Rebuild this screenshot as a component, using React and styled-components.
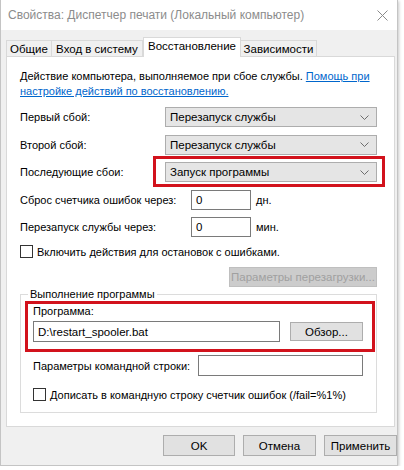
import React from 'react'
import styled, { createGlobalStyle } from 'styled-components'

const GlobalStyle = createGlobalStyle`
  html, body { margin: 0; padding: 0; background: #ffffff; }
  body {
    font-family: "Liberation Sans", Arial, sans-serif;
    font-size: 11px;
    color: #000;
  }
  * { box-sizing: border-box; }
`

const Window = styled.div`
  width: 398px;
  height: 466px;
  background: #f0f0f0;
  border: 1px solid #c4c4c4;
  border-top: none;
  box-shadow: 1px 1px 3px rgba(0, 0, 0, 0.22);
  display: flex;
  flex-direction: column;
`

const TitleBar = styled.div`
  height: 30px;
  background: #fff;
  display: flex;
  align-items: center;
  justify-content: space-between;
  padding: 0 9px 0 7px;
  color: #8c8c8c;
  font-size: 12px;
`

const Body = styled.div`
  flex: 1;
  padding: 8px 0 0 5px;
  display: flex;
  flex-direction: column;
`

const TabStrip = styled.div`
  display: flex;
  align-items: flex-end;
  height: 19px;
  position: relative;
  z-index: 1;
  margin-bottom: -1px;
`

const Tab = styled.div`
  width: ${p => p.w}px;
  height: ${p => (p.active ? 20 : 17)}px;
  background: ${p => (p.active ? '#fff' : '#f0f0f0')};
  border: 1px solid #d9d9d9;
  border-bottom: ${p => (p.active ? 'none' : '1px solid #d9d9d9')};
  border-left: ${p => (p.first || p.active ? '1px solid #d9d9d9' : 'none')};
  display: flex;
  align-items: ${p => (p.active ? 'flex-start' : 'center')};
  padding-top: ${p => (p.active ? 2 : 0)}px;
  justify-content: center;
  font-size: 11.5px;
  white-space: nowrap;
`

const Panel = styled.div`
  width: 389px;
  height: 371px;
  background: #fff;
  border: 1px solid #d9d9d9;
  padding: 12px 17px 0 13px;
`

const Description = styled.p`
  margin: 0;
  line-height: 15px;
  white-space: nowrap;
`

const HelpLink = styled.a`
  color: #0066cc;
  text-decoration: underline;
`

const FailGrid = styled.div`
  display: grid;
  grid-template-columns: 145px 212px;
  grid-auto-rows: 20px;
  row-gap: 7.5px;
  align-items: center;
  margin-top: 8px;
`

const Highlight = styled.div`
  position: relative;
  height: 100%;
  &::after {
    content: '';
    position: absolute;
    left: ${p => p.l}px;
    right: ${p => p.r}px;
    top: ${p => p.t}px;
    bottom: ${p => p.b}px;
    border: 3px solid #d2121c;
    pointer-events: none;
  }
`

const Select = styled.div`
  height: 20px;
  background: #e5e5e5;
  border: 1px solid #adadad;
  display: flex;
  align-items: center;
  justify-content: space-between;
  padding: 0 7px 0 4px;
  font-size: 11.5px;
`

const DelayGrid = styled.div`
  display: grid;
  grid-template-columns: 166px 60px auto;
  column-gap: 5px;
  grid-auto-rows: 20px;
  row-gap: 7px;
  align-items: center;
  margin-top: 8px;
`

const Input = styled.div`
  height: ${p => p.h || 20}px;
  width: ${p => (p.w ? `${p.w}px` : 'auto')};
  background: #fff;
  border: 1px solid #7a7a7a;
  display: flex;
  align-items: center;
  padding-left: 4px;
  font-size: 11.5px;
`

const CheckRow = styled.label`
  display: flex;
  align-items: center;
  gap: 4px;
  margin-top: ${p => p.mt}px;
  height: 13px;
`

const Box = styled.span`
  width: 13px;
  height: 13px;
  border: 1px solid #333;
  background: #fff;
  flex-shrink: 0;
`

const Button = styled.div`
  width: ${p => p.w}px;
  height: ${p => p.h || 20}px;
  background: ${p => (p.disabled ? '#cccccc' : '#e1e1e1')};
  border: 1px solid ${p => (p.disabled ? '#bfbfbf' : '#adadad')};
  color: ${p => (p.disabled ? '#a0a0a0' : '#000')};
  display: flex;
  align-items: center;
  justify-content: center;
  font-size: 11.5px;
  white-space: nowrap;
  flex-shrink: 0;
`

const RightAlign = styled.div`
  display: flex;
  justify-content: flex-end;
  margin-top: 9px;
`

const Group = styled.fieldset`
  margin: 0;
  padding: 3px 13px 11px 12px;
  border: 1px solid #dcdcdc;
  min-width: 0;
`

const Legend = styled.legend`
  padding: 0 2px;
  margin-left: -5px;
  line-height: 14px;
`

const ProgramBlock = styled.div`
  position: relative;
  &::after {
    content: '';
    position: absolute;
    left: -8px;
    right: -12px;
    top: -3px;
    bottom: -10px;
    border: 3px solid #d2121c;
    pointer-events: none;
  }
`

const FieldRow = styled.div`
  display: flex;
  align-items: center;
  justify-content: space-between;
  margin-top: ${p => p.mt || 0}px;
`

const Label = styled.div`
  line-height: 14px;
`

const Footer = styled.div`
  display: flex;
  justify-content: flex-end;
  gap: 8px;
  margin-top: 8px;
`

const Chevron = () => (
  <svg width="9" height="5" viewBox="0 0 9 5">
    <path d="M0.5 0.5 L4.5 4.5 L8.5 0.5" fill="none" stroke="#6d6d6d" strokeWidth="1" />
  </svg>
)

const CloseIcon = () => (
  <svg width="11" height="11" viewBox="0 0 11 11">
    <path d="M0.5 0.5 L10.5 10.5 M10.5 0.5 L0.5 10.5" stroke="#8a8a8a" strokeWidth="1" />
  </svg>
)

const failures = [
  { label: 'Первый сбой:', value: 'Перезапуск службы' },
  { label: 'Второй сбой:', value: 'Перезапуск службы' },
  { label: 'Последующие сбои:', value: 'Запуск программы', marked: true },
]

const tabs = [
  { name: 'Общие', w: 46 },
  { name: 'Вход в систему', w: 91 },
  { name: 'Восстановление', w: 98, active: true },
  { name: 'Зависимости', w: 76 },
]

export default function App() {
  return (
    <>
      <GlobalStyle />
      <Window>
        <TitleBar>
          <span>Свойства: Диспетчер печати (Локальный компьютер)</span>
          <CloseIcon />
        </TitleBar>
        <Body>
          <TabStrip>
            {tabs.map((t, i) => (
              <Tab key={t.name} w={t.w} active={t.active} first={i === 0}>
                {t.name}
              </Tab>
            ))}
          </TabStrip>
          <Panel>
            <Description>
              Действие компьютера, выполняемое при сбое службы. <HelpLink>Помощь при</HelpLink>
              <br />
              <HelpLink>настройке действий по восстановлению.</HelpLink>
            </Description>

            <FailGrid>
              {failures.map(f => (
                <React.Fragment key={f.label}>
                  <span>{f.label}</span>
                  {f.marked ? (
                    <Highlight l={-12} r={-8} t={-6} b={-5}>
                      <Select>
                        {f.value}
                        <Chevron />
                      </Select>
                    </Highlight>
                  ) : (
                    <Select>
                      {f.value}
                      <Chevron />
                    </Select>
                  )}
                </React.Fragment>
              ))}
            </FailGrid>

            <DelayGrid>
              <span>Сброс счетчика ошибок через:</span>
              <Input>0</Input>
              <span>дн.</span>
              <span>Перезапуск службы через:</span>
              <Input>0</Input>
              <span>мин.</span>
            </DelayGrid>

            <CheckRow mt={8}>
              <Box />
              Включить действия для остановок с ошибками.
            </CheckRow>

            <RightAlign>
              <Button w={148} disabled>Параметры перезагрузки...</Button>
            </RightAlign>

            <Group>
              <Legend>Выполнение программы</Legend>
              <ProgramBlock>
                <Label>Программа:</Label>
                <FieldRow mt={3}>
                  <Input w={247} h={21}>D:\restart_spooler.bat</Input>
                  <Button w={73} h={19}>Обзор...</Button>
                </FieldRow>
              </ProgramBlock>
              <FieldRow mt={13}>
                <Label>Параметры командной строки:</Label>
                <Input w={165} h={21} />
              </FieldRow>
              <CheckRow mt={12}>
                <Box />
                Дописать в командную строку счетчик ошибок (/fail=%1%)
              </CheckRow>
            </Group>
          </Panel>
          <Footer>
            <Button w={72} h={21}>OK</Button>
            <Button w={73} h={21}>Отмена</Button>
            <Button w={73} h={21}>Применить</Button>
          </Footer>
        </Body>
      </Window>
    </>
  )
}
